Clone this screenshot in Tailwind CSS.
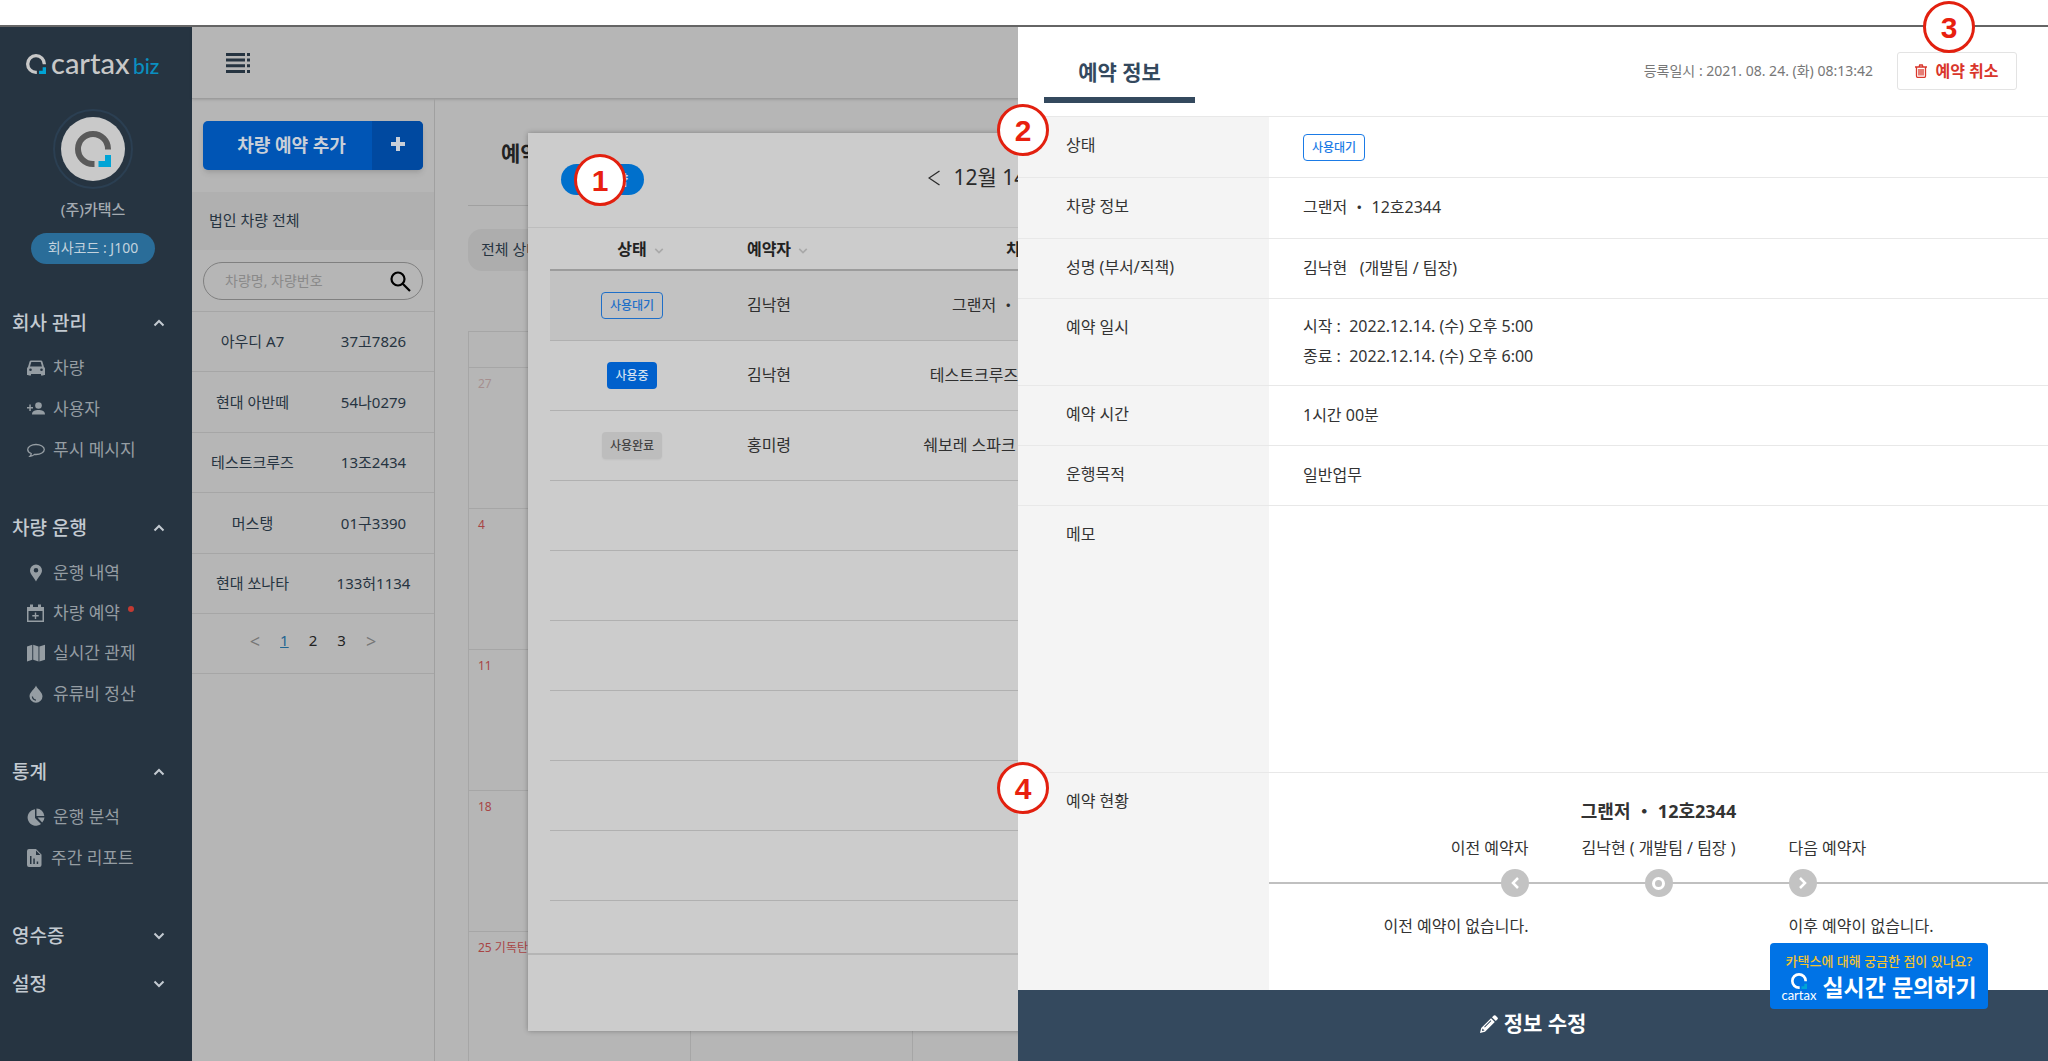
<!DOCTYPE html>
<html lang="ko">
<head>
  <meta charset="UTF-8">
  <meta name="viewport" content="width=device-width, initial-scale=1.0">
  <title>카택스 비즈 - 차량 예약</title>
  <script src="https://cdn.jsdelivr.net/npm/@tailwindcss/browser@4"></script>
</head>
<body class="h-screen flex flex-col bg-white font-['Noto_Sans','Noto_Sans_CJK_KR',sans-serif] text-base text-[#333]">
  <svg class="hidden">
    <symbol id="mark" viewBox="0 0 36 36">
      <path d="M33 18.500V18A15 15 0 1 0 18 33h1.500" fill="none" stroke="currentColor" stroke-width="6"/>
      <path d="M30 24h6v12H23.500v-6H30z" fill="#00a4d6"/>
    </symbol>
    <symbol id="up" viewBox="0 0 12 8"><path d="M1.500 6.500 6 2l4.500 4.500" fill="none" stroke="currentColor" stroke-width="2"/></symbol>
    <symbol id="down" viewBox="0 0 12 8"><path d="M1.500 1.500 6 6l4.500-4.500" fill="none" stroke="currentColor" stroke-width="2"/></symbol>
  </svg>

  <div class="h-[25px] shrink-0"></div>

  <div class="relative flex-1 min-h-0 flex border-t-2 border-[#666] bg-[#b6b6b6]">
    <!-- sidebar -->
    <aside class="w-48 shrink-0 bg-[#263441] text-[#c3cad1]">
      <a href="#" class="flex items-center h-[74px] pl-[26px] gap-[5px]">
        <svg class="w-5 h-5 text-[#c8c8c8]"><use href="#mark"/></svg>
        <span class="font-['Lato',sans-serif] text-[29px] leading-8 font-medium text-[#c8c8c8]">cartax <span class="-ml-1 text-[21px] text-[#0a8fc0]">biz</span></span>
      </a>
      <div class="flex flex-col items-center pt-2 pr-1.5">
        <div class="w-20 h-20 rounded-full border-2 border-[#2b3f52] flex items-center justify-center">
          <div class="w-16 h-16 rounded-full bg-[#c9c9c9] flex items-center justify-center">
            <svg class="w-9 h-9 text-[#5a5a5a]"><use href="#mark"/></svg>
          </div>
        </div>
        <p class="mt-2 text-[15px] leading-6 font-medium text-[#a4abb1]">(주)카택스</p>
        <p class="mt-3 w-31 h-[31px] rounded-full bg-[#2a6d99] text-center text-sm leading-[30px] text-[#c3d3de]">회사코드 : J100</p>
      </div>

      <nav class="mt-[35px] text-[17px] text-[#959da3]">
        <div class="mb-[34px]">
          <button class="flex items-center justify-between w-full h-12 pl-3 pr-[27px] text-[19px] font-medium text-[#c3cad1]">회사 관리 <svg class="w-3 h-2"><use href="#up"/></svg></button>
          <a href="#" class="flex items-center h-[41px] pl-[27px] gap-2">
            <svg class="w-[18px] h-[18px]" viewBox="0 0 18 18" fill="currentColor"><path fill-rule="evenodd" d="M4 1.500h10q1 0 1.400 1L17 8q1 .6 1 1.500V16h-1.500v.5h-2.500V15H4v1.500H1.500V16H0V9.500Q0 8.600 1 8l1.600-5.500q.4-1 1.400-1zM4.300 3 3 7.500h12L13.700 3zM3.500 9.500a1.300 1.300 0 1 0 0 2.600 1.300 1.300 0 0 0 0-2.600zm11 0a1.300 1.300 0 1 0 0 2.600 1.300 1.300 0 0 0 0-2.600z"/></svg>차량</a>
          <a href="#" class="flex items-center h-[41px] pl-[27px] gap-2">
            <svg class="w-[18px] h-[18px]" viewBox="0 0 18 18" fill="currentColor"><circle cx="11.500" cy="5.500" r="3.300"/><path d="M5 14.500c0-3.500 3-4.500 6.500-4.500s6.500 1 6.500 4.500zM2.300 4.500h1.500V7H6v1.500H3.800V11H2.300V8.500H0V7h2.300z"/></svg>사용자</a>
          <a href="#" class="flex items-center h-[41px] pl-[27px] gap-2">
            <svg class="w-[18px] h-[18px]" viewBox="0 0 18 18" fill="none" stroke="currentColor" stroke-width="1.300"><path d="M9 3.500c4.600 0 8.300 2.200 8.300 5s-3.700 5-8.300 5l-1.500-.1Q5.500 15.300 3 15.300q1.300-1.200 1.200-2.800C2 11.600.7 10.200.7 8.500c0-2.800 3.700-5 8.300-5z"/></svg>푸시 메시지</a>
        </div>
        <div class="mb-[34px]">
          <button class="flex items-center justify-between w-full h-12 pl-3 pr-[27px] text-[19px] font-medium text-[#c3cad1]">차량 운행 <svg class="w-3 h-2"><use href="#up"/></svg></button>
          <a href="#" class="flex items-center h-[41px] pl-[27px] gap-2">
            <svg class="w-[18px] h-[18px]" viewBox="0 0 18 18" fill="currentColor"><path fill-rule="evenodd" d="M9 .5a6 6 0 0 1 6 6c0 3.500-3.500 6-6 11-2.500-5-6-7.500-6-11a6 6 0 0 1 6-6zM9 4a2.300 2.300 0 1 0 0 4.600A2.300 2.300 0 0 0 9 4z"/></svg>운행 내역</a>
          <a href="#" class="flex items-center h-10 pl-[27px] gap-2">
            <svg class="w-[18px] h-[18px]" viewBox="0 0 18 18" fill="currentColor"><path fill-rule="evenodd" d="M3 .5h3V3h5V.5h3V3h3v15H0V3h3zM1.500 7v9.500h14V7zM7.800 8.500h1.400V11h2.500v1.400H9.200v2.500H7.800v-2.500H5.300V11h2.500z"/></svg>차량 예약 <i class="w-1.5 h-1.5 rounded-full bg-[#c43a32] mb-2"></i></a>
          <a href="#" class="flex items-center h-10 pl-[27px] gap-2">
            <svg class="w-[18px] h-[18px]" viewBox="0 0 18 18" fill="currentColor"><path d="M0 2.500 5.300.8v15L0 17.500zM6.200.8l5.300 1.700v15l-5.300-1.700zM12.400 2.500 18 .8v15l-5.600 1.700z"/></svg>실시간 관제</a>
          <a href="#" class="flex items-center h-[41px] pl-[27px] gap-2">
            <svg class="w-[18px] h-[18px]" viewBox="0 0 18 18" fill="currentColor"><path fill-rule="evenodd" d="M9 .5c1 3.500 6.500 6.500 6.500 10.700a6.500 6.500 0 0 1-13 0C2.500 7 8 4 9 .5zM4.800 11.500c.2 2.500 1.800 4 4.200 4.200v-1.200c-1.700-.2-2.800-1.200-3-3z"/></svg>유류비 정산</a>
        </div>
        <div class="mb-[34px]">
          <button class="flex items-center justify-between w-full h-12 pl-3 pr-[27px] text-[19px] font-medium text-[#c3cad1]">통계 <svg class="w-3 h-2"><use href="#up"/></svg></button>
          <a href="#" class="flex items-center h-[41px] pl-[27px] gap-2">
            <svg class="w-[18px] h-[18px]" viewBox="0 0 18 18" fill="currentColor"><path d="M8 1.200V10l6 6A8.300 8.300 0 1 1 8 1.200zM9.500.5a8 8 0 0 1 7.800 7.500H9.500zM10.500 9.500h7a8 8 0 0 1-2.300 5z"/></svg>운행 분석</a>
          <a href="#" class="flex items-center h-[41px] pl-[27px] gap-2">
            <svg class="w-4 h-[18px]" viewBox="0 0 16 18" fill="currentColor"><path fill-rule="evenodd" d="M2 0h7l5.500 5.500V16q0 2-2 2H2q-2 0-2-2V2q0-2 2-2zM9 1.500V6h4.500zM3 7v8h1.500V7zm3.300 2.500V15h1.500V9.500zM9.700 12.500V15h1.500v-2.500z"/></svg>주간 리포트</a>
        </div>
        <button class="flex items-center justify-between w-full h-12 pl-3 pr-[27px] text-[19px] font-medium text-[#c3cad1]">영수증 <svg class="w-3 h-2"><use href="#down"/></svg></button>
        <button class="flex items-center justify-between w-full h-12 pl-3 pr-[27px] text-[19px] font-medium text-[#c3cad1]">설정 <svg class="w-3 h-2"><use href="#down"/></svg></button>
      </nav>
    </aside>

    <div class="flex-1 min-w-0 flex flex-col">
      <header class="h-[72px] shrink-0 flex items-center pl-[34px] border-b border-[#9c9c9c] shadow-sm">
        <button aria-label="메뉴">
          <svg class="w-6 h-5" viewBox="0 0 24 20" fill="#263441"><path d="M0 0h19v3H0zM0 5.600h19v3H0zM0 11.200h19v3H0zM0 17h19v3H0zM21 0h3v3h-3zM21 5.600h3v3h-3zM21 11.200h3v3h-3zM21 17h3v3h-3z"/></svg>
        </button>
      </header>

      <div class="flex-1 min-h-0 flex">
        <!-- vehicle list -->
        <section class="w-[243px] shrink-0 border-r border-[#a0a0a0] text-[15px] text-[#263441]">
          <div class="px-[11px] pt-[22px] pb-[22px]">
            <button class="flex w-full h-[49px] rounded-[5px] overflow-hidden bg-[#0055b5] text-[#c9cfd8] text-lg font-bold shadow-md">
              <span class="flex-1 self-center pl-2 pb-0.5">차량 예약 추가</span>
              <span class="w-[51px] h-full bg-[#0049a0] flex items-center justify-center">
                <svg class="w-[14px] h-[14px] -mt-1" viewBox="0 0 14 14" fill="currentColor"><path d="M5 0h4v5h5v4H9v5H5V9H0V5h5z"/></svg>
              </span>
            </button>
          </div>
          <h2 class="h-[58px] pl-[17px] leading-[56px] bg-[#b0b0b0]">법인 차량 전체</h2>
          <div class="px-[11px] pt-3 pb-[11px]">
            <div class="flex items-center h-[38px] rounded-full border border-[#808080] pl-[21px] pr-[11px]">
              <input type="text" aria-label="차량 검색" placeholder="차량명, 차량번호" class="flex-1 min-w-0 text-sm outline-none placeholder:text-[#8a8a8a]">
              <button aria-label="검색"><svg class="w-[21px] h-[21px]" viewBox="0 0 21 21" fill="none" stroke="#000" stroke-width="2.200"><circle cx="8" cy="8" r="6.500"/><path d="m12.700 12.700 7.300 7.300"/></svg></button>
            </div>
          </div>
          <table class="w-full h-[303px] text-center border-y border-[#a6a6a6]">
            <tbody class="divide-y divide-[#a6a6a6]">
              <tr><td class="w-1/2">아우디 A7</td><td>37고7826</td></tr>
              <tr><td>현대 아반떼</td><td>54나0279</td></tr>
              <tr><td>테스트크루즈</td><td>13조2434</td></tr>
              <tr><td>머스탱</td><td>01구3390</td></tr>
              <tr><td>현대 쏘나타</td><td>133허1134</td></tr>
            </tbody>
          </table>
          <div class="flex items-center justify-center gap-5 h-[60px] border-b border-[#a6a6a6] pb-1.5 text-[#222]">
            <a href="#" class="text-[#777] text-lg">&lt;</a>
            <a href="#" class="text-[#1f6591] underline">1</a>
            <a href="#">2</a>
            <a href="#">3</a>
            <a href="#" class="text-[#777] text-lg">&gt;</a>
          </div>
        </section>

        <!-- calendar -->
        <main class="relative flex-1 min-w-0 overflow-hidden pl-[33px] pr-6">
          <h1 class="h-[107px] pl-[33px] leading-[108px] text-[21px] font-bold text-[#222] border-b border-[#a0a0a0]">예약 현황</h1>
          <button class="mt-[23px] h-[42px] rounded-[14px] bg-[#adadad] px-[13px] pb-0.5 text-[15px] text-[#263441]">전체 상태</button>
          <table class="mt-[60px] w-full table-fixed border-collapse text-xs leading-5 text-[#a84545] [&_th]:border [&_td]:border [&_th]:border-[#a6a6a6] [&_td]:border-[#a6a6a6] [&_td]:align-top [&_td]:px-[9px] [&_td]:py-1.5">
            <thead><tr class="h-9"><th></th><th></th><th></th><th></th><th></th><th></th><th></th></tr></thead>
            <tbody>
              <tr class="h-[141px]"><td class="text-[#a58f8f]">27</td><td></td><td></td><td></td><td></td><td></td><td></td></tr>
              <tr class="h-[141px]"><td>4</td><td></td><td></td><td></td><td></td><td></td><td></td></tr>
              <tr class="h-[141px]"><td>11</td><td></td><td></td><td></td><td></td><td></td><td></td></tr>
              <tr class="h-[141px]"><td>18</td><td></td><td></td><td></td><td></td><td></td><td></td></tr>
              <tr class="h-[141px]"><td>25 기독탄신일</td><td></td><td></td><td></td><td></td><td></td><td></td></tr>
            </tbody>
          </table>

          <!-- day dialog -->
          <section class="absolute left-[93px] top-[34px] w-[986px] bg-[#ccc] shadow-[0_0_5px_rgba(0,0,0,0.3)]">
            <div class="relative h-[95px] border-b border-[#bdbdbd] flex items-center justify-center gap-3.5 pb-1 text-[21px] text-[#2a2a2a]">
              <button class="absolute left-[33px] top-[31px] w-[83px] h-[31px] rounded-full bg-[#0070cc] text-sm font-bold text-[#cfdcea]">신규예약
                <span class="absolute left-[13px] -top-[10px] size-[52px] rounded-full border-3 border-[#e2200f] bg-white font-['Liberation_Sans',sans-serif] text-[30px] leading-[47px] text-[#e8200f]">1</span>
              </button>
              <button aria-label="이전 날"><svg class="w-3 h-4" viewBox="0 0 12 16" fill="none" stroke="currentColor" stroke-width="1.300"><path d="M11.500 1 1 8l10.500 7"/></svg></button>
              <span>12월 14일 (수)&nbsp;</span>
              <button aria-label="다음 날"><svg class="w-3 h-4" viewBox="0 0 12 16" fill="none" stroke="currentColor" stroke-width="1.300"><path d="M.5 1 11 8 .5 15"/></svg></button>
            </div>
            <div class="h-[727px] px-[22px] border-b-2 border-[#b5b5b5]">
              <table class="w-full table-fixed text-center text-[#2f2f2f]">
                <thead>
                  <tr class="h-[42px] border-b-2 border-[#9c9c9c] text-[#222]">
                    <th class="w-[164px]"><span class="relative">상태<svg class="absolute left-[37px] top-[9px] w-2.5 h-2 text-[#a9a9a9]"><use href="#down"/></svg></span></th>
                    <th class="w-[110px]"><span class="relative">예약자<svg class="absolute left-[51px] top-[9px] w-2.5 h-2 text-[#a9a9a9]"><use href="#down"/></svg></span></th>
                    <th class="w-[394px]">차량</th>
                    <th></th>
                  </tr>
                </thead>
                <tbody class="[&_tr]:h-[70px] [&_tr]:border-b [&_tr]:border-[#b0b0b0]">
                  <tr class="bg-[#c2c2c2]"><td><span class="inline-block h-[27px] px-2 rounded-[4px] border border-[#1f6fc8] text-xs leading-[25px] font-medium text-[#1f6fc8]">사용대기</span></td><td>김낙현</td><td>그랜저 ・ 12호2344</td><td></td></tr>
                  <tr><td><span class="inline-block h-[27px] px-2 rounded-[4px] bg-[#0060cc] text-xs leading-[27px] font-medium text-[#d3e0f0]">사용중</span></td><td>김낙현</td><td>테스트크루즈 ・ 13조2434</td><td></td></tr>
                  <tr><td><span class="inline-block h-[27px] px-2 rounded-[4px] bg-[#bdbdbd] text-xs leading-[27px] font-medium text-[#444] shadow-xs">사용완료</span></td><td>홍미령</td><td>쉐보레 스파크 ・ 133허1134</td><td></td></tr>
                  <tr><td colspan="4"></td></tr>
                  <tr><td colspan="4"></td></tr>
                  <tr><td colspan="4"></td></tr>
                  <tr><td colspan="4"></td></tr>
                  <tr><td colspan="4"></td></tr>
                  <tr><td colspan="4"></td></tr>
                </tbody>
              </table>
            </div>
            <div class="h-[76px]"></div>
          </section>
        </main>
      </div>
    </div>

    <!-- reservation drawer -->
    <section class="absolute inset-y-0 right-0 w-[1030px] flex flex-col bg-white">
      <header class="h-[89px] shrink-0 flex items-start justify-between pl-[26px] pr-[31px]">
        <h2 class="w-[151px] h-[76px] border-b-6 border-[#34495e] text-center text-[21px] leading-[91px] font-bold text-[#34495e]">예약 정보</h2>
        <div class="relative flex items-center gap-6 mt-[25px]">
          <p class="text-sm text-[#777]">등록일시 : 2021. 08. 24. (화) 08:13:42</p>
          <button class="flex items-center justify-center gap-2 w-[120px] h-[38px] rounded-[3px] border border-[#e3e3e3] font-bold text-[#d9362b]">
            <svg class="w-3 h-[14px]" viewBox="0 0 12 14" fill="none" stroke="currentColor" stroke-width="1.300"><path d="M0 3h12M4 3l.7-2h2.600L8 3M1.500 3v9q0 1.300 1 1.300h7q1 0 1-1.300V3M4 5v6.500M6 5v6.500M8 5v6.500"/></svg>예약 취소
          </button>
          <span class="absolute right-[42px] -top-[51px] size-[52px] rounded-full border-3 border-[#e2200f] bg-white text-center font-['Liberation_Sans',sans-serif] font-bold text-[30px] leading-[47px] text-[#e8200f]">3</span>
        </div>
      </header>

      <div class="relative flex-1 min-h-0">
        <table class="w-full h-full text-left border-t border-[#e8e8e8] [&_th]:w-[251px] [&_th]:bg-[#f4f4f4] [&_th]:font-normal [&_th]:align-top [&_th]:pl-12 [&_th]:pt-4 [&_th]:leading-6 [&_td]:pl-[34px]">
          <tbody class="divide-y divide-[#e8e8e8]">
            <tr class="h-[61px]"><th>상태</th><td><span class="inline-block h-[27px] px-2 rounded-[4px] border border-[#1b7be6] text-xs leading-[25px] font-medium text-[#1b7be6]">사용대기</span></td></tr>
            <tr class="h-[61px]"><th>차량 정보</th><td class="pb-0.5">그랜저 ・ 12호2344</td></tr>
            <tr class="h-[60px]"><th>성명 (부서/직책)</th><td class="pb-0.5">김낙현 &nbsp;&nbsp;(개발팀 / 팀장)</td></tr>
            <tr class="h-[87px]"><th>예약 일시</th><td class="pb-0.5 leading-[30px]">시작 :&nbsp; 2022.12.14. (수) 오후 5:00<br>종료 :&nbsp; 2022.12.14. (수) 오후 6:00</td></tr>
            <tr class="h-[60px]"><th>예약 시간</th><td class="pb-0.5">1시간 00분</td></tr>
            <tr class="h-[60px]"><th>운행목적</th><td class="pb-0.5">일반업무</td></tr>
            <tr class="h-[267px]"><th>메모</th><td></td></tr>
            <tr>
              <th>예약 현황</th>
              <td class="pl-0! align-top">
                <p class="pt-6 text-center text-lg leading-7 font-bold">그랜저 ・ 12호2344</p>
                <div class="relative grid grid-cols-[1fr_260px_1fr] mt-[11px] leading-6">
                  <i class="absolute inset-x-0 top-[46px] h-0.5 bg-[#c0c0c0]"></i>
                  <div class="relative flex flex-col items-end">
                    <span>이전 예약자</span>
                    <button aria-label="이전 예약" class="my-[9px] size-7 rounded-full bg-[#c3c3c3] flex items-center justify-center"><svg class="w-2 h-3" viewBox="0 0 8 12" fill="none" stroke="#fff" stroke-width="2.500"><path d="M7 1 2 6l5 5"/></svg></button>
                    <span class="mt-2">이전 예약이 없습니다.</span>
                  </div>
                  <div class="relative flex flex-col items-center">
                    <span>김낙현 ( 개발팀 / 팀장 )</span>
                    <i class="my-[9px] size-7 rounded-full bg-[#c3c3c3] flex items-center justify-center"><i class="size-[13px] rounded-full border-3 border-white"></i></i>
                  </div>
                  <div class="relative flex flex-col items-start">
                    <span>다음 예약자</span>
                    <button aria-label="다음 예약" class="my-[9px] size-7 rounded-full bg-[#c3c3c3] flex items-center justify-center"><svg class="w-2 h-3" viewBox="0 0 8 12" fill="none" stroke="#fff" stroke-width="2.500"><path d="m1 1 5 5-5 5"/></svg></button>
                    <span class="mt-2">이후 예약이 없습니다.</span>
                  </div>
                </div>
              </td>
            </tr>
          </tbody>
        </table>
        <span class="absolute -left-[21px] -top-3 size-[52px] rounded-full border-3 border-[#e2200f] bg-white text-center font-['Liberation_Sans',sans-serif] font-bold text-[30px] leading-[47px] text-[#e8200f]">2</span>
        <span class="absolute -left-[21px] top-[646px] size-[52px] rounded-full border-3 border-[#e2200f] bg-white text-center font-['Liberation_Sans',sans-serif] font-bold text-[30px] leading-[47px] text-[#e8200f]">4</span>
      </div>

      <button class="h-[71px] shrink-0 flex items-center justify-center gap-1.5 pb-1 bg-[#34495e] text-[21px] font-bold text-white">
        <svg class="w-[18px] h-[18px]" viewBox="0 0 18 18" fill="currentColor"><path fill-rule="evenodd" d="M13.800.6q.8-.8 1.700 0l2 2q.8.800 0 1.700L15.800 6 12 2.200zM11 3.200 14.800 7 5 16.800 0 18l1.200-5zM2.500 13.500l-.6 2.600 2.600-.6zM10.700 5.300l-6.500 6.500.6.6 6.500-6.500z"/></svg>정보 수정
      </button>

      <!-- live chat -->
      <button class="absolute right-[60px] bottom-[52px] w-[218px] h-[66px] rounded-[4px] bg-[#0073e6] text-white">
        <span class="block pt-0.5 text-[13px] leading-5 font-medium text-[#f2c230]">카택스에 대해 궁금한 점이 있나요?</span>
        <span class="flex items-center justify-center gap-1.5">
          <span class="flex flex-col items-center font-['Lato',sans-serif] text-[13px] leading-[12px]"><svg class="w-4 h-4"><use href="#mark"/></svg>cartax</span>
          <span class="text-[23px] leading-8 font-bold">실시간 문의하기</span>
        </span>
      </button>
    </section>
  </div>
</body>
</html>
